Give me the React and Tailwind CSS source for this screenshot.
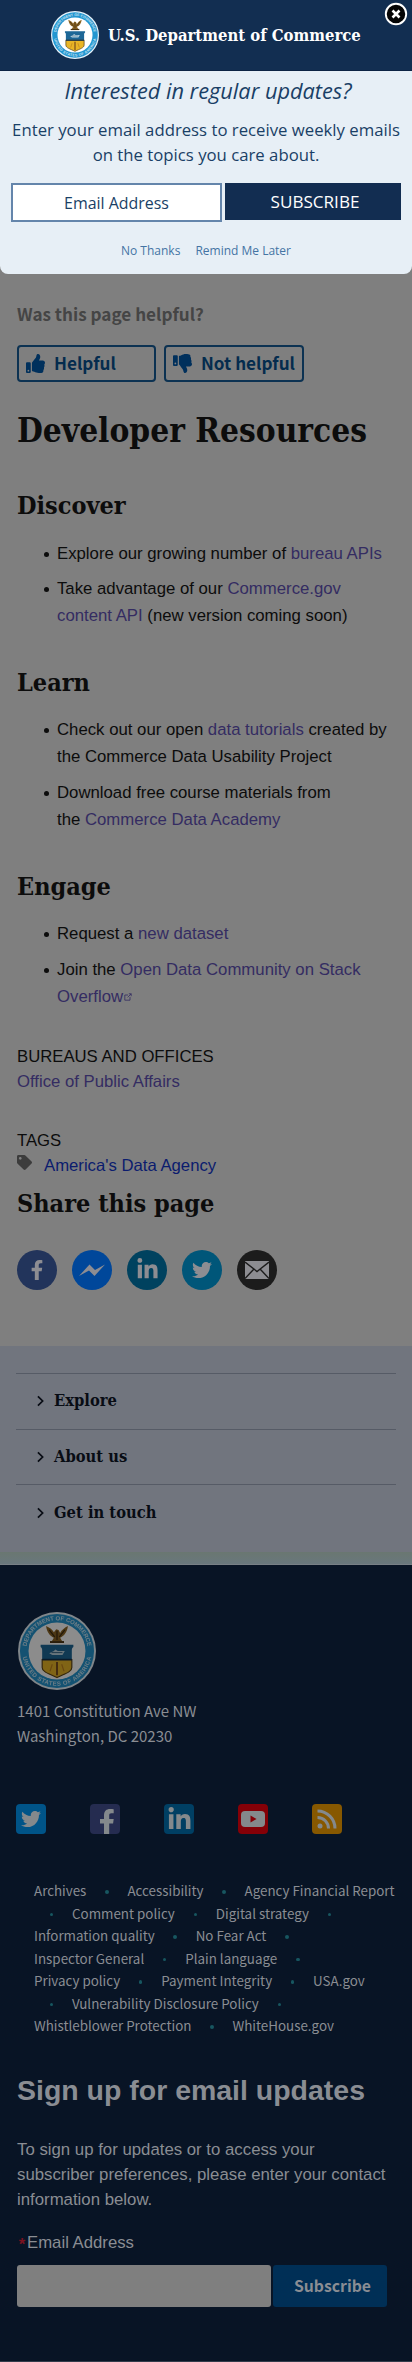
import React from "react";
import { FaFacebookF, FaLinkedinIn, FaTwitter, FaThumbsUp, FaThumbsDown, FaTag } from "react-icons/fa";

const serif = "font-['DejaVu_Serif_Condensed','DejaVu_Serif',serif] font-bold";
const sans = "font-['Liberation_Sans',Arial,sans-serif]";
const source = "font-['Noto_Sans_CJK_SC',sans-serif]";
const open = "font-['Open_Sans',sans-serif]";

function Seal({ id, className }) {
  return (
    <svg viewBox="0 0 100 100" className={className}>
      <circle cx="50" cy="50" r="50" fill="#e9f3fa" />
      <circle cx="50" cy="50" r="47.5" fill="#2496d0" />
      <circle cx="50" cy="50" r="36.5" fill="#fff" />
      <path id={`${id}-top`} d="M10.500 50a39.500 39.500 0 0 1 79 0" fill="none" />
      <path id={`${id}-bottom`} d="M5.500 50a44.500 44.500 0 0 0 89 0" fill="none" />
      <g fill="#c4e2f2" fontSize="7.6" fontWeight="bold" fontFamily="Liberation Sans" textAnchor="middle">
        <text><textPath href={`#${id}-top`} startOffset="50%" textLength="112">DEPARTMENT OF COMMERCE</textPath></text>
        <text><textPath href={`#${id}-bottom`} startOffset="50%" textLength="124">UNITED STATES OF AMERICA</textPath></text>
      </g>
      <path d="M36 18c1 8 5 13 10 15l-3 5h14l-3-5c5-2 9-7 10-15-4 2-8 5-10 9l-2-4-3-1-3 4c-2-4-6-6-10-8z" fill="#8a6424" />
      <path d="M40 23l7 9M60 23l-7 9M50 24v12" stroke="#3d2a10" strokeWidth="1.5" fill="none" />
      <path d="M41 38.500h18" stroke="#4c3614" strokeWidth="2.500" />
      <path d="M29 42h42v3c-2 1-2 3-2 5v12H31V50c0-2 0-4-2-5z" fill="#1d6797" />
      <path d="M31 61h38v10c0 6-9 8-19 13-10-5-19-7-19-13z" fill="#e9b526" stroke="#5b4313" strokeWidth="1.500" />
      <path d="M31 61h38" stroke="#132f4c" strokeWidth="2" />
      <path d="M40 53l6-3 2-2 3 2h9l-3 5H44z" fill="#b9d3e0" />
      <path d="M43 52h14" stroke="#1d5075" strokeWidth="1" />
      <path d="M50 64v17" stroke="#7a4e1c" strokeWidth="2.500" />
      <path d="M44 67l-3 9M56 67l3 9" stroke="#c0841d" strokeWidth="1.500" />
    </svg>
  );
}

function Modal() {
  return (
    <div className={`absolute inset-x-0 top-0 h-[274px] overflow-hidden rounded-b-[8px] bg-[#e7eff6] text-center text-[#1a3f66] ${open}`}>
      <div className="flex h-[71px] items-center border-b border-[#0c2344] bg-[#122e51] pl-[51px]">
        <Seal id="head" className="size-[48px] shrink-0" />
        <div className={`ml-[9px] whitespace-nowrap text-[16.54px] leading-6 text-white ${serif}`}>U.S. Department of Commerce</div>
      </div>
      <svg viewBox="0 0 24 24" className="absolute top-[2px] right-[4px] size-6">
        <circle cx="12" cy="12" r="10.200" fill="#050505" stroke="#fff" strokeWidth="1.900" />
        <path d="M8.500 8.500l7 7M15.500 8.500l-7 7" stroke="#fff" strokeWidth="2.600" />
      </svg>
      <h2 className="mt-[4px] pl-1 text-[21.75px] leading-8 italic">Interested in regular updates?</h2>
      <p className="mt-[10px] text-[16.74px] leading-[25px]">
        Enter your email address to receive weekly emails<br />on the topics you care about.
      </p>
      <div className="mt-[16px] flex gap-[3px] pl-[11px]">
        <div className="flex h-[39px] w-[211px] items-center justify-center border-2 border-[#6485ab] bg-white text-[15.95px] leading-6">Email Address</div>
        <div className="flex h-[37px] w-[176px] items-center justify-center bg-[#122d51] pt-px pl-1 text-[17.1px] leading-6 text-white">SUBSCRIBE</div>
      </div>
      <div className="mt-[21px] flex justify-center gap-[15px] text-[12px] leading-4 text-[#4474a4]">
        <span>No Thanks</span>
        <span>Remind Me Later</span>
      </div>
    </div>
  );
}

const H2 = ({ children, className = "" }) => (
  <h2 className={`text-[25px] leading-8 ${serif} ${className}`}>{children}</h2>
);
const A = ({ children }) => <a className="text-[#342c62]">{children}</a>;
const Item = ({ children }) => (
  <li className="flex whitespace-nowrap">
    <span className="mt-[11px] mr-[8px] ml-[27px] size-[5px] shrink-0 rounded-full bg-[#0c0c0c]" />
    <div>{children}</div>
  </li>
);
const List = ({ children, className }) => (
  <ul className={`flex flex-col gap-[9px] text-[16.76px] leading-[26.8px] ${className}`}>{children}</ul>
);

const Circle = ({ className, children }) => (
  <span className={`flex size-10 items-center justify-center rounded-full text-[#8d8d92] ${className}`}>{children}</span>
);
const Square = ({ className, children }) => (
  <span className={`flex size-[30px] justify-center rounded-[4px] text-[#84898c] ${className}`}>{children}</span>
);

const linkRows = [
  ["Archives", "*", "Accessibility", "*", "Agency Financial Report"],
  ["^", "Comment policy", "*", "Digital strategy", "*"],
  ["Information quality", "*", "No Fear Act", "*"],
  ["Inspector General", "*", "Plain language", "*"],
  ["Privacy policy", "*", "Payment Integrity", "*", "USA.gov"],
  ["^", "Vulnerability Disclosure Policy", "*"],
  ["Whistleblower Protection", "*", "WhiteHouse.gov"],
];

function FooterLink({ text }) {
  if (text === "*" || text === "^") {
    return (
      <span className={`flex h-full w-[41px] items-center justify-center pt-[3px] ${text === "^" ? "-ml-[3px]" : ""}`}>
        <span className="size-[3.500px] rounded-full bg-[#175660]" />
      </span>
    );
  }
  return <a>{text}</a>;
}

export default function App() {
  return (
    <div className={`relative h-[2362px] w-[412px] overflow-hidden bg-[#7f7f7f] text-[#0c0c0c] ${sans}`}>
      <main className="h-[1346px] px-[17px] pt-[302px]">
        <div className={`text-[17.12px] leading-6 font-bold text-[#454545] ${source}`}>Was this page helpful?</div>
        <div className={`mt-[19px] flex gap-[8px] text-[17.12px] leading-6 font-bold text-[#052c4e] ${source}`}>
          <div className="flex h-[37px] w-[139px] items-center rounded-[4px] border-2 border-[#0c3252] pb-px pl-[7px]">
            <FaThumbsUp className="size-[19px] text-[#00305c]" />
            <span className="ml-[9px]">Helpful</span>
          </div>
          <div className="flex h-[37px] w-[140px] items-center rounded-[4px] border-2 border-[#0c3252] pb-px pl-[7px]">
            <FaThumbsDown className="size-[19px] text-[#00305c]" />
            <span className="ml-[9px] whitespace-nowrap">Not helpful</span>
          </div>
        </div>
        <h1 className={`mt-[29px] text-[33.15px] leading-10 whitespace-nowrap ${serif}`}>Developer Resources</h1>

        <H2 className="mt-[39px]">Discover</H2>
        <List className="mt-[18.500px]">
          <Item>Explore our growing number of <A>bureau APIs</A></Item>
          <Item>Take advantage of our <A>Commerce.gov</A><br /><A>content API</A> (new version coming soon)</Item>
        </List>

        <H2 className="mt-[37.500px]">Learn</H2>
        <List className="mt-[18px]">
          <Item>Check out our open <A>data tutorials</A> created by<br />the Commerce Data Usability Project</Item>
          <Item>Download free course materials from<br />the <A>Commerce Data Academy</A></Item>
        </List>

        <H2 className="mt-[37.500px]">Engage</H2>
        <List className="mt-[18px]">
          <Item>Request a <A>new dataset</A></Item>
          <Item>
            Join the <A>Open Data Community on Stack</A><br /><A>Overflow</A>
            <svg viewBox="0 0 10 10" className="ml-px inline-block size-[8px] text-[#342c62]" fill="none" stroke="currentColor">
              <path d="M5 2.500H1V9h6.500V5M4.500 5.500L9 1M6 1h3v3" />
            </svg>
          </Item>
        </List>

        <div className="mt-[33.500px] text-[16.72px] leading-[25px]">
          <div>BUREAUS AND OFFICES</div>
          <div><A>Office of Public Affairs</A></div>
          <div className="mt-[34px]">TAGS</div>
          <div className="flex text-[#0b1c6e]">
            <FaTag className="mt-[2px] mr-[12px] size-[15px] text-[#3c3c3c]" />America's Data Agency
          </div>
        </div>
        <H2 className="mt-[10.500px]">Share this page</H2>

        <div className="mt-[29.500px] flex gap-[15px]">
          <Circle className="bg-[#22345b]"><FaFacebookF className="size-[20px]" /></Circle>
          <Circle className="bg-[#00479a]">
            <svg viewBox="0 0 28 16" className="h-[16px] w-[28px]" fill="currentColor">
              <path d="M1 14L11.500 2.500l5.500 5.500L27 2.500 16.500 14 11 8.500z" />
            </svg>
          </Circle>
          <Circle className="bg-[#00425f]"><FaLinkedinIn className="size-[23px]" /></Circle>
          <Circle className="bg-[#005679]"><FaTwitter className="size-[20px]" /></Circle>
          <Circle className="bg-[#1c1c1c]">
            <svg viewBox="0 0 24 18" className="h-[18px] w-[24px]">
              <path d="M0 0h24v18H0z" fill="currentColor" />
              <path d="M0 1l12 9.500L24 1M0 17.500l8.500-9M24 17.500l-8.500-9" stroke="#1c1c1c" strokeWidth="1.400" fill="none" />
            </svg>
          </Circle>
        </div>
      </main>

      <nav className={`h-[206px] bg-[#71757e] px-[16px] pt-[27px] ${serif}`}>
        {["Explore", "About us", "Get in touch"].map((t) => (
          <div key={t} className="flex h-[55.7px] items-center border-t border-[#565b66] pl-[20px] text-[16.4px] leading-6 text-[#080c14]">
            <svg viewBox="0 0 10 14" className="mr-[9px] h-[12px] w-[9px]" fill="none" stroke="currentColor" strokeWidth="2">
              <path d="M2 1.500L7.500 7 2 12.500" />
            </svg>
            {t}
          </div>
        ))}
      </nav>
      <div className="h-[13px] border-b border-[#788086] bg-linear-to-b from-[#6a7771] to-[#69777d]" />

      <footer className="h-[797px] border-b border-[#323c4b] bg-[#081425] px-[17px] pt-[47px] text-[#8a8d93]">
        <Seal id="foot" className="ml-px size-[78px] brightness-[.55]" />
        <div className={`mt-[8px] text-[15px] leading-[25px] ${source}`}>
          1401 Constitution Ave NW<br />Washington, DC 20230
        </div>
        <div className="mt-[56px] -ml-px flex gap-[44px]">
          <Square className="items-center bg-[#005488]"><FaTwitter className="size-[20px]" /></Square>
          <Square className="items-end bg-[#252c50]">
            <svg viewBox="0 0 14 26" className="ml-[3px] h-[26px] w-[14px]" fill="currentColor">
              <path d="M4 26V15.500H0V11h4V7.500C4 3 6.500 1 10 1c1.700 0 3 .1 3.700.2v4H11.500C9.600 5.200 9.200 6 9.200 7.500V11h4.500l-.6 4.500H9.200V26z" />
            </svg>
          </Square>
          <Square className="items-center bg-[#003f63]"><FaLinkedinIn className="size-[25px]" /></Square>
          <Square className="items-center bg-[#850007]">
            <svg viewBox="0 0 24 16" className="h-[16px] w-[24px]">
              <rect width="24" height="16" rx="4" fill="currentColor" />
              <path d="M9.500 4.500v7l6-3.500z" fill="#850007" />
            </svg>
          </Square>
          <Square className="items-center bg-[#875800]">
            <svg viewBox="0 0 20 20" className="size-[20px]" fill="none" stroke="currentColor" strokeWidth="3">
              <circle cx="3" cy="17" r="2.500" fill="currentColor" stroke="none" />
              <path d="M0.500 8.500a11 11 0 0 1 11 11M0.500 2a17.500 17.500 0 0 1 17.500 17.500" />
            </svg>
          </Square>
        </div>
        <div className={`mt-[45px] pl-[17px] text-[13.38px] leading-[22.5px] ${source}`}>
          {linkRows.map((row, i) => (
            <div key={i} className="flex h-[22.5px] items-center whitespace-nowrap">
              {row.map((t, j) => <FooterLink key={j} text={t} />)}
            </div>
          ))}
        </div>
        <h2 className="mt-[36.500px] text-[28.47px] leading-[34px] font-bold whitespace-nowrap">Sign up for email updates</h2>
        <p className="mt-[30px] text-[16.8px] leading-[25px] whitespace-nowrap">
          To sign up for updates or to access your<br />subscriber preferences, please enter your contact<br />information below.
        </p>
        <div className="mt-[17.500px] flex text-[16.74px] leading-[25px]">
          <span className="w-[10px] pt-[2px] text-center font-bold text-[#7a1220]">*</span>Email Address
        </div>
        <div className="mt-[8.500px] flex gap-[2px]">
          <div className="h-[42px] w-[254px] rounded-[3px] bg-[#7f7f7f]" />
          <div className={`flex h-[42px] w-[114px] items-center justify-center rounded-[3px] bg-[#002f56] pl-[5px] text-[15.75px] leading-6 font-bold ${source}`}>Subscribe</div>
        </div>
      </footer>
      <Modal />
    </div>
  );
}
